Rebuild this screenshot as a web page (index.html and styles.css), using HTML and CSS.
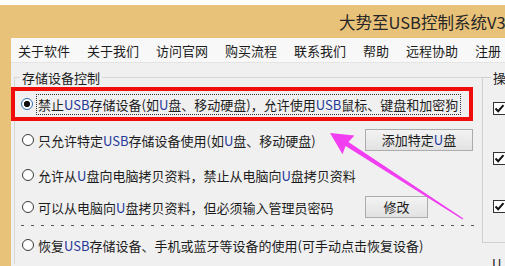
FILE: index.html
```html
<!DOCTYPE html>
<html lang="zh-CN">
<head>
<meta charset="utf-8">
<title>大势至USB控制系统</title>
<link rel="stylesheet" href="styles.css">
</head>
<body>
<div class="window">
  <div class="titlebar"><span class="title">大势至USB控制系统V3</span></div>
  <div class="client">
    <nav class="menubar">
      <span>关于软件</span><span>关于我们</span><span>访问官网</span><span>购买流程</span><span>联系我们</span><span>帮助</span><span>远程协助</span><span>注册</span>
    </nav>
    <div class="panel">
      <fieldset class="group main">
        <legend>存储设备控制</legend>
        <div class="opt-selected">
          <span class="radio checked"></span>
          <span class="lbl focus">禁止<span class="lat">USB</span>存储设备(如<span class="lat">U</span>盘、移动硬盘)，允许使用<span class="lat">USB</span>鼠标、键盘和加密狗</span>
        </div>
        <div class="opt r2">
          <span class="choice"><span class="radio"></span><span class="lbl">只允许特定<span class="lat">USB</span>存储设备使用(如<span class="lat">U</span>盘、移动硬盘)</span></span>
          <button class="btn wide">添加特定<span class="lat">U</span>盘</button>
        </div>
        <div class="opt r3">
          <span class="choice"><span class="radio"></span><span class="lbl">允许从<span class="lat">U</span>盘向电脑拷贝资料，禁止从电脑向<span class="lat">U</span>盘拷贝资料</span></span>
        </div>
        <div class="opt r4">
          <span class="choice"><span class="radio"></span><span class="lbl">可以从电脑向<span class="lat">U</span>盘拷贝资料，但必须输入管理员密码</span></span>
          <button class="btn small">修改</button>
        </div>
        <div class="sep"></div>
        <div class="opt r5">
          <span class="choice"><span class="radio"></span><span class="lbl">恢复<span class="lat">USB</span>存储设备、手机或蓝牙等设备的使用(可手动点击恢复设备)</span></span>
        </div>
      </fieldset>
      <div class="side">
        <fieldset class="group ops">
          <legend>操</legend>
          <span class="cb c1"><svg viewBox="0 0 11 11" width="11" height="11"><path d="M1.5 5.5 L4.2 8.2 L9.5 2.2" fill="none" stroke="#111" stroke-width="2"/></svg></span>
          <span class="cb c2"><svg viewBox="0 0 11 11" width="11" height="11"><path d="M1.5 5.5 L4.2 8.2 L9.5 2.2" fill="none" stroke="#111" stroke-width="2"/></svg></span>
          <span class="cb c3"><svg viewBox="0 0 11 11" width="11" height="11"><path d="M1.5 5.5 L4.2 8.2 L9.5 2.2" fill="none" stroke="#111" stroke-width="2"/></svg></span>
        </fieldset>
        <div class="cut">U</div>
      </div>
    </div>
  </div>
</div>
<svg class="arrow" width="505" height="266" viewBox="0 0 505 266">
  <polygon points="330,133 354.5,135.6 348.4,141.9 463.4,218.4 462.6,219.6 345.6,146.1 342.5,154.2" fill="#f03ef0"/>
</svg>
</body>
</html>
```

FILE: styles.css
```css
* { box-sizing: border-box; }
html, body { margin: 0; padding: 0; }
body {
  width: 505px;
  height: 266px;
  overflow: hidden;
  position: relative;
  background: #ffffff;
  font-family: "Noto Sans CJK SC", "Microsoft YaHei", sans-serif;
  color: #1c1c1c;
}
.window {
  margin-top: 5px;
  height: 261px;
  background: #e9c27a;
  padding-left: 11px;
}
.titlebar {
  height: 33px;
  display: flex;
  align-items: center;
  padding-left: 328px;
  font-size: 16.5px;
  line-height: 22px;
  color: #262626;
  white-space: nowrap;
  overflow: hidden;
}
.client {
  height: 228px;
  background: #f0f0f0;
  overflow: hidden;
}
.menubar {
  height: 25px;
  display: flex;
  align-items: center;
  gap: 17px;
  padding-left: 7px;
  background: #f8f8f8;
  border-bottom: 1px solid #e4e4e4;
  font-size: 13px;
  line-height: 17px;
  white-space: nowrap;
  overflow: hidden;
}
.panel {
  display: flex;
  align-items: flex-start;
  padding: 6px 0 0 3px;
}
.group {
  margin: 0;
  padding: 0;
  min-width: 0;
  border: 1px solid #d6d6d6;
}
.group legend {
  font-size: 13px;
  line-height: 17px;
  padding: 0 2px;
  margin-left: 5px;
  color: #1c1c1c;
}
.main {
  flex: none;
  width: 468px;
  border-right: 0;
  border-bottom: 0;
}
.opt-selected {
  margin: 1px 0 0 -4px;
  width: 462px;
  height: 34px;
  border: 4px solid #f20d0d;
  display: flex;
  align-items: center;
  gap: 4px;
  padding-left: 6px;
}
.lbl {
  white-space: nowrap;
  font-size: 13px;
  line-height: 19px;
}
.focus {
  outline: 1px dotted #333;
  padding: 0 2px 0 1px;
}
.lat { color: #24389a; }
.opt {
  display: grid;
  grid-template-columns: 350px auto;
  align-items: center;
}
.r2 { height: 38px; }
.r3 { height: 32px; }
.r4 { height: 32px; }
.r5 { height: 38px; }
.choice {
  display: flex;
  align-items: center;
  gap: 4px;
  padding-left: 7px;
  white-space: nowrap;
}
.radio {
  flex: none;
  width: 12px;
  height: 12px;
  border: 1px solid #3a3a3a;
  border-radius: 50%;
  background: #ffffff;
}
.radio.checked {
  border-color: #2c6fb4;
  background: radial-gradient(circle, #111 0 2.8px, #ffffff 3.4px);
}
.btn {
  height: 22px;
  padding: 0;
  border: 1px solid #acacac;
  background: linear-gradient(#f3f3f3, #e2e2e2);
  font-family: "Noto Sans CJK SC", "Microsoft YaHei", sans-serif;
  font-size: 13px;
  line-height: 20px;
  color: #1c1c1c;
}
.btn.wide { width: 108px; }
.btn.small { width: 63px; }
.sep {
  margin: 2px 0 0 6px;
  width: 453px;
  height: 1px;
  background: repeating-linear-gradient(90deg, #555 0 3px, transparent 3px 10px);
}
.side {
  flex: none;
  width: 60px;
}
.ops {
  height: 174px;
  border-right: 0;
  border-color: #d0d0d0;
}
.ops legend { margin-left: 8px; font-size: 13px; }
.cb {
  display: flex;
  align-items: center;
  justify-content: center;
  width: 13px;
  height: 13px;
  margin-left: 10px;
  border: 1px solid #333;
  background: #ffffff;
}
.c1 { margin-top: 16px; }
.c2 { margin-top: 37px; }
.c3 { margin-top: 35px; }
.cut {
  margin: 13px 0 0 10px;
  font-size: 13px;
  line-height: 16px;
}
.arrow {
  position: absolute;
  left: 0;
  top: 0;
  pointer-events: none;
}
```
